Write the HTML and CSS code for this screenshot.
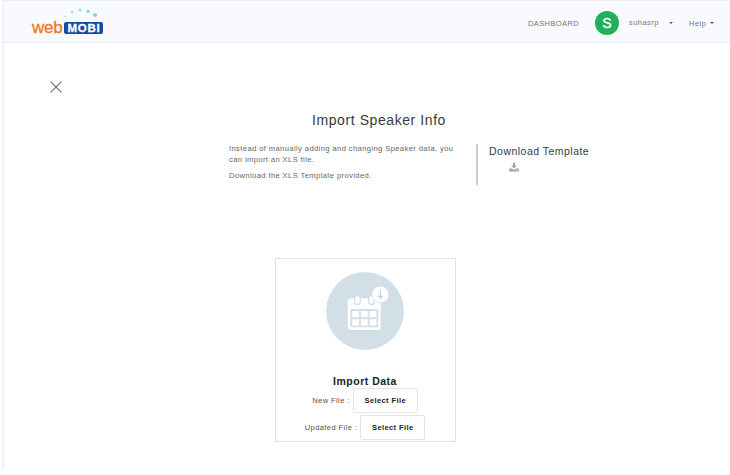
FILE: index.html
```html
<!DOCTYPE html>
<html lang="en">
<head>
<meta charset="utf-8">
<title>Import Speaker Info</title>
<link rel="stylesheet" href="styles.css">
</head>
<body>
<div class="app">
  <header class="topbar">
    <a class="logo" aria-label="webMOBI">
      <svg class="logo-dots" width="74" height="14" viewBox="0 0 74 14">
        <circle cx="25" cy="6" r=".7" fill="#d9ecd5"/>
        <circle cx="33.500" cy="8.500" r="1" fill="#b5e3e5"/>
        <circle cx="40" cy="4" r="1.300" fill="#9cdde6"/>
        <circle cx="48" cy="2" r="1.500" fill="#9ddfe9"/>
        <circle cx="56" cy="3.200" r="1.800" fill="#8edbe6"/>
        <circle cx="63" cy="7" r="2" fill="#7dd5e3"/>
      </svg>
      <span class="logo-name"><span class="logo-web">web</span><span class="logo-mobi">MOBI</span></span>
    </a>
    <nav class="nav">
      <a class="nav-dashboard">DASHBOARD</a>
      <span class="avatar">S</span>
      <a class="nav-user">suhasrp</a>
      <i class="caret caret-user"></i>
      <a class="nav-help">Help</a>
      <i class="caret"></i>
    </nav>
  </header>
  <main class="content">
    <button class="close" aria-label="Close">
      <svg width="12" height="12" viewBox="0 0 12 12"><path d="M.7.7 11.3 11.3M11.3.7.7 11.3" stroke="#707070" stroke-width="1.150"/></svg>
    </button>
    <h1 class="title">Import Speaker Info</h1>
    <section class="intro">
      <div class="intro-text">
        <p>Instead of manually adding and changing Speaker data, you<br>can import an XLS file.</p>
        <p>Download the XLS Template provided.</p>
      </div>
      <div class="template">
        <h2>Download Template</h2>
        <svg class="download" width="10" height="10" viewBox="0 0 10 10">
          <path d="M4 .5h2v3h2L5 6.600 2 3.500h2z" fill="#a6a6a6"/>
          <path d="M.2 6.400h2.900L5 8l1.900-1.600h2.900v3H.2z" fill="#a6a6a6"/>
          <path d="M6.800 8.300h.7M8.200 8.300h.7" stroke="#fff" stroke-width=".6"/>
        </svg>
      </div>
    </section>
    <section class="card">
      <svg class="card-icon" width="78" height="78" viewBox="0 0 78 78">
        <circle cx="39" cy="39" r="38.900" fill="#d2dfe6"/>
        <rect x="21.700" y="26.300" width="33" height="31.700" rx="3.500" fill="#fff"/>
        <g fill="#fff" stroke="#d2dfe6" stroke-width="1.300">
          <rect x="28.600" y="23.500" width="5.800" height="9" rx="2.900"/>
          <rect x="42.600" y="23.500" width="5.800" height="9" rx="2.900"/>
        </g>
        <rect x="24.300" y="37" width="28" height="18.300" rx="1" fill="#d2dfe6"/>
        <g fill="#fff">
          <rect x="26.200" y="39" width="6.800" height="6.300"/>
          <rect x="34.900" y="39" width="6.800" height="6.300"/>
          <rect x="43.600" y="39" width="6.800" height="6.300"/>
          <rect x="26.200" y="47.200" width="6.800" height="6.300"/>
          <rect x="34.900" y="47.200" width="6.800" height="6.300"/>
          <rect x="43.600" y="47.200" width="6.800" height="6.300"/>
        </g>
        <circle cx="54.400" cy="22.500" r="8.400" fill="#fff" stroke="#d2dfe6" stroke-width=".8"/>
        <path d="M54.400 18.300v7.500M52.200 23.800l2.200 2.300 2.200-2.300" fill="none" stroke="#c3d2da" stroke-width="1.300"/>
      </svg>
      <h2 class="card-title">Import Data</h2>
      <div class="file-row"><span>New File :</span><button class="select">Select File</button></div>
      <div class="file-row"><span>Updated File :</span><button class="select">Select File</button></div>
    </section>
  </main>
</div>
</body>
</html>
```
FILE: styles.css
```css
* { box-sizing: border-box; }
body {
  margin: 0;
  background: #fff;
  color: #3a3a3a;
  font-family: "Liberation Sans", Arial, sans-serif;
}
h1, h2, p { margin: 0; font-weight: normal; }
button { margin: 0; padding: 0; border: 0; background: none; font-family: inherit; }
.app {
  height: 470px;
  margin-left: 2px;
  border-left: 2px solid #eff2fa;
}
.topbar {
  display: flex;
  justify-content: space-between;
  height: 43px;
  padding: 0 15px 0 28px;
  background: #f8fafe;
  border-top: 1px solid #e9eef3;
  border-bottom: 1px solid #e9edf2;
}
.logo { display: flex; flex-direction: column; padding-top: 7px; }
.logo-dots { display: block; }
.logo-name { display: flex; align-items: center; height: 12px; }
.logo-web {
  width: 32px;
  color: #f07820;
  font-size: 17px;
  line-height: 12px;
  letter-spacing: -.2px;
  -webkit-text-stroke: .3px #f07820;
}
.logo-mobi {
  width: 39px;
  height: 12px;
  border-radius: 2px;
  background: #154ba5;
  color: #fff;
  font-size: 11.500px;
  font-weight: bold;
  line-height: 12.500px;
  letter-spacing: .7px;
  text-align: center;
  padding-left: 1px;
  -webkit-text-stroke: .3px #fff;
}
.nav {
  display: flex;
  align-items: center;
  height: 44px;
  padding-right: 1px;
  color: #777;
  font-size: 7.500px;
}
.nav-dashboard { width: 67px; letter-spacing: .4px; }
.avatar {
  width: 24px;
  height: 24px;
  margin-right: 10px;
  border-radius: 50%;
  background: #23ae5c;
  color: #fff;
  font-size: 14px;
  line-height: 24px;
  text-align: center;
  -webkit-text-stroke: .3px #fff;
}
.nav-user { width: 40px; letter-spacing: .45px; padding-bottom: 2px; }
.caret {
  border: 2px solid transparent;
  border-top-color: #555;
  border-bottom: 0;
}
.caret-user { margin-right: 16px; }
.nav-help { width: 21px; letter-spacing: .5px; }
.content {
  display: flex;
  flex-direction: column;
}
.close { width: 12px; height: 12px; margin: 38px 0 0 45.500px; }
.close svg { display: block; }
.title {
  margin: 18px 0 0 308px;
  font-size: 14px;
  line-height: 18px;
  letter-spacing: .58px;
}
.intro { display: flex; margin: 15px 0 0 225px; height: 41px; }
.intro-text {
  width: 247px;
  color: #666;
  font-size: 7.600px;
  line-height: 10.500px;
  letter-spacing: .39px;
  white-space: nowrap;
}
.intro-text p { margin-bottom: 6px; }
.template { padding-left: 11px; border-left: 2px solid #ccc; }
.template h2 {
  font-size: 10.500px;
  line-height: 14px;
  letter-spacing: .48px;
}
.download { display: block; margin: 4px 0 0 20px; }
.card {
  display: flex;
  flex-direction: column;
  align-items: center;
  width: 181px;
  height: 184px;
  margin: 73px 0 0 271px;
  padding: 13px 1px 0 0;
  border: 1px solid #e0e0e0;
}
.card-icon { display: block; flex: none; }
.card-title {
  margin-top: 24px;
  color: #222;
  font-size: 10.500px;
  font-weight: bold;
  line-height: 14px;
  letter-spacing: .5px;
}
.file-row {
  display: flex;
  flex: none;
  align-items: center;
  gap: 3px;
  height: 25px;
  margin-bottom: 2px;
  color: #555;
  font-size: 7.500px;
  letter-spacing: .42px;
}
.select {
  width: 65px;
  height: 25px;
  border: 1px solid #e4e4e4;
  border-radius: 2px;
  color: #222;
  font-size: 7.500px;
  font-weight: bold;
  letter-spacing: .4px;
}
```
